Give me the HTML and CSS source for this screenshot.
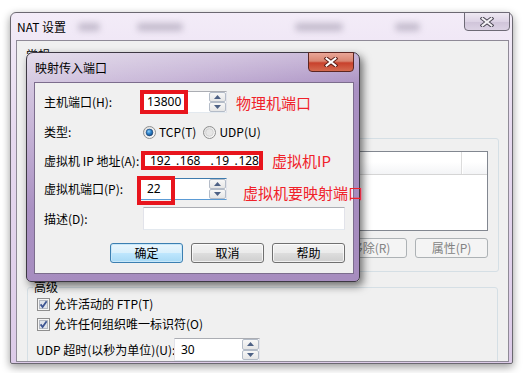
FILE: index.html
```html
<!DOCTYPE html>
<html lang="zh-CN">
<head>
<meta charset="utf-8">
<title>NAT 设置</title>
<link rel="stylesheet" href="styles.css">
</head>
<body>
<div class="win">
  <div class="win-title">
    <span class="title-text">NAT 设置</span>
    <span class="ghost g1"></span>
    <span class="ghost g2"></span>
    <span class="ghost g3"></span>
    <span class="ghost g4"></span>
  </div>
  <div class="close close-outer">
    <svg width="14" height="10" viewBox="0 0 14 10"><path d="M2.5 1.5 L11.5 8.5 M11.5 1.5 L2.5 8.5" stroke="#4a4652" stroke-width="4" stroke-linecap="square"/><path d="M2.5 1.5 L11.5 8.5 M11.5 1.5 L2.5 8.5" stroke="#f4f2f6" stroke-width="2" stroke-linecap="square"/></svg>
  </div>
  <div class="win-client">
    <div class="gen-label">常规</div>
    <div class="fwd-group">
      <div class="list">
        <div class="list-head"><span class="col c1"></span><span class="col c2"></span></div>
        <div class="list-body"></div>
      </div>
      <div class="fwd-btns">
        <span class="btn dis">添加(A)</span>
        <span class="btn dis">移除(R)</span>
        <span class="btn dis">属性(P)</span>
      </div>
    </div>
    <fieldset class="adv">
      <legend>高级</legend>
      <div class="chk-row r1">
        <svg class="chk" width="13" height="13" viewBox="0 0 13 13"><rect x="0.5" y="0.5" width="12" height="12" fill="#f6f6f6" stroke="#8f8f8f"/><rect x="2.5" y="2.5" width="8" height="8" fill="#dfe3ea" stroke="#b4b9c2"/><path d="M3.6 6.4 L5.6 9 L9.6 3.3" fill="none" stroke="#3d5592" stroke-width="1.8"/></svg>
        <span>允许活动的 FTP(T)</span>
      </div>
      <div class="chk-row r2">
        <svg class="chk" width="13" height="13" viewBox="0 0 13 13"><rect x="0.5" y="0.5" width="12" height="12" fill="#f6f6f6" stroke="#8f8f8f"/><rect x="2.5" y="2.5" width="8" height="8" fill="#dfe3ea" stroke="#b4b9c2"/><path d="M3.6 6.4 L5.6 9 L9.6 3.3" fill="none" stroke="#3d5592" stroke-width="1.8"/></svg>
        <span>允许任何组织唯一标识符(O)</span>
      </div>
      <div class="udp-row">
        <span class="udp-label">UDP 超时(以秒为单位)(U):</span>
        <div class="spin-field udp">
          <span class="edit">30</span>
          <span class="spin">
            <span class="sb up"><svg width="7" height="4" viewBox="0 0 7 4"><path d="M0 4 L3.5 0 L7 4Z" fill="#4d6185"/></svg></span>
            <span class="sb dn"><svg width="7" height="4" viewBox="0 0 7 4"><path d="M0 0 L3.5 4 L7 0Z" fill="#4d6185"/></svg></span>
          </span>
        </div>
      </div>
    </fieldset>
  </div>
</div>

<div class="dlg">
  <div class="dlg-title">映射传入端口</div>
  <div class="close close-red">
    <svg width="14" height="10" viewBox="0 0 14 10"><path d="M2.5 1.5 L11.5 8.5 M11.5 1.5 L2.5 8.5" stroke="#5a1d16" stroke-width="4" stroke-linecap="square"/><path d="M2.5 1.5 L11.5 8.5 M11.5 1.5 L2.5 8.5" stroke="#ffffff" stroke-width="2" stroke-linecap="square"/></svg>
  </div>
  <div class="dlg-client">
    <div class="row row1">
      <span class="lbl">主机端口(H):</span>
      <div class="field-wrap">
        <div class="spin-field">
          <span class="edit">13800</span>
          <span class="spin">
            <span class="sb up"><svg width="7" height="4" viewBox="0 0 7 4"><path d="M0 4 L3.5 0 L7 4Z" fill="#4d6185"/></svg></span>
            <span class="sb dn"><svg width="7" height="4" viewBox="0 0 7 4"><path d="M0 0 L3.5 4 L7 0Z" fill="#4d6185"/></svg></span>
          </span>
        </div>
        <span class="redbox rb1"></span>
      </div>
    </div>
    <div class="row row2">
      <span class="lbl">类型:</span>
      <div class="radios">
        <svg class="radio" width="13" height="13" viewBox="0 0 13 13"><defs><radialGradient id="dot" cx="0.4" cy="0.35" r="0.7"><stop offset="0" stop-color="#8fd0fb"/><stop offset="0.5" stop-color="#2a7fc8"/><stop offset="1" stop-color="#17497f"/></radialGradient><linearGradient id="rbg" x1="0" y1="0" x2="1" y2="1"><stop offset="0" stop-color="#dcdcdc"/><stop offset="1" stop-color="#ffffff"/></linearGradient></defs><circle cx="6.5" cy="6.5" r="6" fill="url(#rbg)" stroke="#8e8f8f"/><circle cx="6.5" cy="6.5" r="3.4" fill="url(#dot)" stroke="#1c3f6e" stroke-width="0.6"/></svg>
        <span class="rtext">TCP(T)</span>
        <svg class="radio r-udp" width="13" height="13" viewBox="0 0 13 13"><circle cx="6.5" cy="6.5" r="6" fill="url(#rbg)" stroke="#8e8f8f"/><circle cx="6.5" cy="6.5" r="3.8" fill="#e6e6e6" stroke="#c4c4c4" stroke-width="0.6"/></svg>
        <span class="rtext">UDP(U)</span>
      </div>
    </div>
    <div class="row row3">
      <span class="lbl">虚拟机 IP 地址(A):</span>
      <div class="ip-box">
        <span class="seg s1">192</span><span class="dot d1">.</span><span class="seg s2">168</span><span class="dot d2">.</span><span class="seg s3">19</span><span class="dot d3">.</span><span class="seg s4">128</span>
      </div>
    </div>
    <div class="row row4">
      <span class="lbl">虚拟机端口(P):</span>
      <div class="field-wrap">
        <div class="spin-field focus">
          <span class="edit">22</span>
          <span class="spin">
            <span class="sb up"><svg width="7" height="4" viewBox="0 0 7 4"><path d="M0 4 L3.5 0 L7 4Z" fill="#4d6185"/></svg></span>
            <span class="sb dn"><svg width="7" height="4" viewBox="0 0 7 4"><path d="M0 0 L3.5 4 L7 0Z" fill="#4d6185"/></svg></span>
          </span>
        </div>
        <span class="redbox rb4"></span>
      </div>
    </div>
    <div class="row row5">
      <span class="lbl">描述(D):</span>
      <div class="desc"></div>
    </div>
    <div class="btn-row">
      <span class="btn def">确定</span>
      <span class="btn">取消</span>
      <span class="btn">帮助</span>
    </div>
  </div>
</div>

<div class="note n1">物理机端口</div>
<div class="note n2">虚拟机IP</div>
<div class="note n3">虚拟机要映射端口</div>
</body>
</html>
```

FILE: styles.css
```css
* { box-sizing: border-box; }

body {
  margin: 0;
  width: 525px;
  height: 373px;
  background: #ffffff;
  position: relative;
  overflow: hidden;
  font-family: "Noto Sans CJK SC", "Noto Sans", sans-serif;
  font-size: 12px;
  color: #000;
}

/* ---------- outer window ---------- */
.win {
  position: absolute;
  left: 10px;
  top: 12px;
  width: 503px;
  height: 352px;
  border: 1px solid #6b6871;
  border-radius: 6px 6px 2px 2px;
  background: linear-gradient(180deg, #f3ecf8 0%, #e6d9ef 35%, #dccbe8 100%);
  box-shadow: 0 3px 8px rgba(0, 0, 0, 0.4);
  padding: 0 3px 1px 5px;
  display: flex;
  flex-direction: column;
}

.win-title {
  height: 27px;
  flex: none;
  display: flex;
  align-items: center;
  padding-left: 1px;
}

.title-text {
  font-size: 12px;
  line-height: 14px;
  width: 53px;
  white-space: nowrap;
}

.ghost {
  display: inline-block;
  height: 8px;
  background: rgba(110, 100, 125, 0.35);
  filter: blur(3px);
  border-radius: 4px;
}
.g1 { margin-left: 8px; width: 22px; }
.g2 { margin-left: 37px; width: 46px; }
.g3 { margin-left: 112px; width: 48px; }
.g4 { margin-left: 52px; width: 25px; }

.close {
  position: absolute;
  display: flex;
  align-items: center;
  justify-content: center;
  border-radius: 0 0 4px 4px;
}

.close-outer {
  top: -1px;
  right: 2px;
  width: 46px;
  height: 19px;
  border: 1px solid #6e6a76;
  background: linear-gradient(180deg, #eee8f2 0%, #ddd3e5 50%, #cfc4d9 51%, #dcd2e4 100%);
}

.win-client {
  flex: 1;
  background: #f0f0f0;
  border: 1px solid #8f8a97;
  overflow: hidden;
}

.gen-label {
  margin: 7px 0 0 9px;
  line-height: 14px;
  height: 14px;
}

.fwd-group {
  margin: 76px 9px 0 10px;
  height: 134px;
  border: 1px solid #d5dfe5;
  border-radius: 3px;
  padding: 12px 10px 0 10px;
  display: flex;
  flex-direction: column;
}

.list {
  height: 80px;
  border: 1px solid #828790;
  background: #fff;
  display: flex;
  flex-direction: column;
}

.list-head {
  height: 23px;
  flex: none;
  display: flex;
  background: linear-gradient(180deg, #ffffff 0%, #ffffff 45%, #f3f4f6 100%);
  border-bottom: 1px solid #d5d5d5;
}
.col.c1 { flex: 1; border-right: 1px solid #dcdcdc; box-shadow: 1px 0 0 #fff; }
.col.c2 { width: 25px; }

.fwd-btns {
  margin-top: 7px;
  display: flex;
  justify-content: flex-end;
  gap: 8px;
}

.btn {
  width: 73px;
  height: 20px;
  display: flex;
  align-items: center;
  justify-content: center;
  border: 1px solid #707070;
  border-radius: 3px;
  background: linear-gradient(180deg, #f2f2f2 0%, #ebebeb 48%, #dddddd 52%, #cfcfcf 100%);
  box-shadow: inset 0 0 0 1px rgba(255, 255, 255, 0.7);
  font-size: 12px;
  line-height: 14px;
}

.btn.dis {
  border-color: #adb2b5;
  background: #f4f4f4;
  color: #838383;
  box-shadow: none;
}

.btn.def {
  border-color: #3c7fb1;
  background: linear-gradient(180deg, #eaf6fd 0%, #d9f0fc 48%, #bee6fd 52%, #a7d9f5 100%);
  box-shadow: inset 0 0 0 1px #c8e7f9;
}

/* ---------- advanced group ---------- */
.adv {
  margin: 8px 10px 0 10px;
  padding: 0 0 20px 0;
  min-width: 0;
  border: 1px solid #d5dfe5;
  border-radius: 3px;
}

.adv legend {
  margin-left: 5px;
  padding: 0 1px;
  line-height: 14px;
  font-size: 12px;
}

.chk-row {
  display: flex;
  align-items: center;
  height: 16px;
  padding-left: 9px;
  gap: 4px;
  line-height: 14px;
}
.chk-row.r1 { margin-top: 2px; }
.chk-row.r2 { margin-top: 4px; }

.udp-row {
  display: flex;
  align-items: center;
  margin-top: 6px;
  padding-left: 8px;
  height: 23px;
}

.udp-label {
  width: 138px;
  white-space: nowrap;
  line-height: 14px;
}

/* ---------- spin fields ---------- */
.spin-field {
  width: 87px;
  height: 22px;
  display: flex;
  border: 1px solid #e2e3ea;
  border-top-color: #abadb3;
  border-bottom-color: #e3e9ef;
  background: #fff;
}

.spin-field.udp { width: 86px; height: 23px; }

.spin-field.focus {
  border-color: #5b9bd5;
  border-top-color: #3d7bad;
  border-right-color: #e2e3ea;
}

.edit {
  flex: 1;
  padding-left: 6px;
  display: flex;
  align-items: center;
  line-height: 14px;
  font-size: 12px;
  font-family: "Noto Sans", "Noto Sans CJK SC", sans-serif;
}

.spin {
  width: 17px;
  display: flex;
  flex-direction: column;
}

.sb {
  flex: 1;
  display: flex;
  align-items: center;
  justify-content: center;
  border: 1px solid #b4bcc8;
  border-radius: 2px;
  background: linear-gradient(180deg, #f7f7f7 0%, #e6e6e6 100%);
}

/* ---------- dialog ---------- */
.dlg {
  position: absolute;
  left: 26px;
  top: 52px;
  width: 334px;
  height: 230px;
  border: 1px solid #3d3843;
  border-radius: 7px 7px 5px 5px;
  background:
    linear-gradient(180deg, rgba(255, 255, 255, 0.22) 0%, rgba(255, 255, 255, 0) 14%),
    linear-gradient(160deg, #ddd4e6 0%, #c7b5d7 22%, #aa91c3 45%, #a68cbf 70%, #a78dbf 100%);
  box-shadow: 3px 4px 9px rgba(0, 0, 0, 0.55);
  padding: 0 5px 7px 7px;
  display: flex;
  flex-direction: column;
}

.dlg-title {
  height: 29px;
  flex: none;
  display: flex;
  align-items: center;
  padding-left: 1px;
  line-height: 14px;
}

.close-red {
  top: -1px;
  right: 5px;
  width: 46px;
  height: 20px;
  border: 1px solid #5c2622;
  background: linear-gradient(180deg, #e9a697 0%, #d98672 45%, #c8412c 55%, #d46a4f 100%);
}

.dlg-client {
  flex: 1;
  background: #f0f0f0;
  border: 1px solid #7c6d8d;
  padding: 7px 8px 0 9px;
  display: flex;
  flex-direction: column;
}

.row {
  display: flex;
  align-items: center;
}
.row1 { height: 23px; }
.row2 { height: 22px; margin-top: 8px; }
.row3 { height: 21px; margin-top: 7px; }
.row4 { height: 24px; margin-top: 6px; }
.row5 { height: 23px; margin-top: 6px; }

.lbl {
  width: 96px;
  flex: none;
  white-space: nowrap;
  line-height: 14px;
}

.field-wrap {
  position: relative;
}

.redbox {
  position: absolute;
  border: 4px solid #e8151d;
}
.rb1 { left: 0; top: -1px; width: 48px; height: 24px; }
.rb4 { left: -3px; top: -2px; width: 38px; height: 29px; }

.radios {
  display: flex;
  align-items: center;
  margin-left: 3px;
}
.radio { flex: none; }
.rtext { margin-left: 3px; line-height: 14px; }
.r-udp { margin-left: 7px; }

.ip-box {
  margin-left: 1px;
  width: 122px;
  height: 19px;
  border: 4px solid #e8151d;
  background: #fff;
  display: flex;
  align-items: center;
  padding-left: 5px;
  line-height: 11px;
  white-space: nowrap;
  font-family: "Noto Sans", "Noto Sans CJK SC", sans-serif;
}
.seg, .dot { display: inline-block; }
.s1 { width: 27px; }
.d1 { width: 4px; }
.s2 { width: 32px; }
.d2 { width: 5px; }
.s3 { width: 20px; }
.d3 { width: 4px; }

.desc {
  margin-left: 3px;
  width: 202px;
  height: 23px;
  background: #fff;
  border: 1px solid #e2e3ea;
  border-top-color: #abadb3;
  border-bottom-color: #e3e9ef;
}

.btn-row {
  margin-top: 13px;
  display: flex;
  justify-content: flex-end;
  gap: 8px;
}

/* ---------- annotations ---------- */
.note {
  position: absolute;
  color: #f0222a;
  font-size: 15px;
  line-height: 18px;
  white-space: nowrap;
}
.n1 { left: 236px; top: 94px; }
.n2 { left: 272px; top: 152px; }
.n3 { left: 243px; top: 184px; }
```
